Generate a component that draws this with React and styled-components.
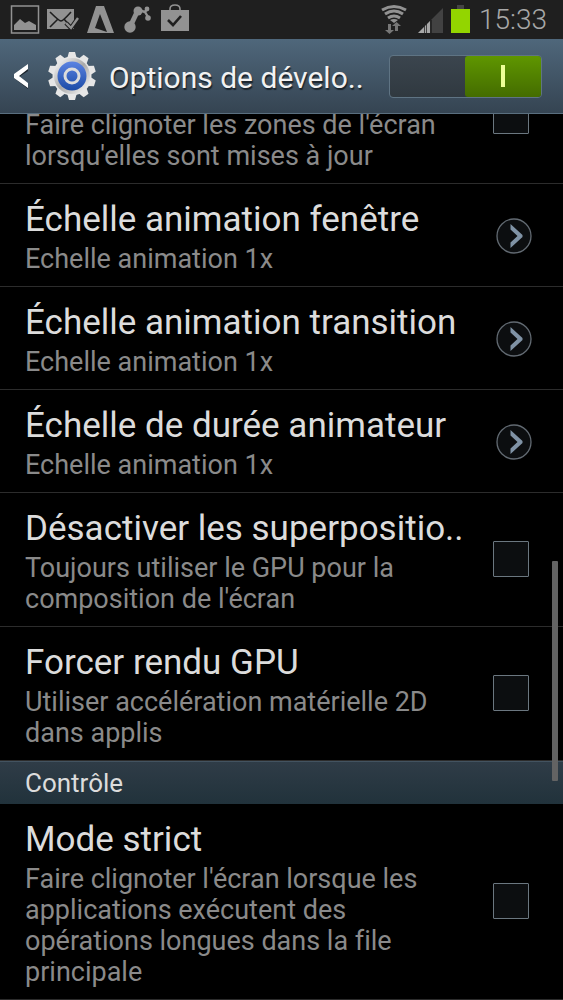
import { useState } from "react";
import styled, { createGlobalStyle } from "styled-components";

const GlobalStyle = createGlobalStyle`
    * {
        box-sizing: border-box;
    }
    body {
        margin: 0;
        background: #000;
        font-family: Roboto, "Liberation Sans", sans-serif;
        font-variant-ligatures: none;
    }
`
const Screen = styled.div`
    height: 100vh;
    display: flex;
    flex-direction: column;
    background: #000;
    color: #dcdcdc;
    overflow: hidden;
`
const StatusBar = styled.div`
    flex: none;
    height: 39px;
    padding: 0 16px 0 10px;
    display: flex;
    align-items: center;
    justify-content: space-between;
    background: #1f1f1f;
`
const StatusGroup = styled.div`
    display: flex;
    align-items: center;
    gap: 8px;
`
const Clock = styled.time`
    font-size: 28px;
    font-weight: 300;
    color: #a8a8a8;
`
const Header = styled.header`
    flex: none;
    height: 75px;
    padding: 0 21px 0 12px;
    display: flex;
    align-items: center;
    background: linear-gradient(#4f677b, #354452);
    border-bottom: 1px solid #5a6f7f;
`
const BackLink = styled.a`
    flex: 1;
    display: flex;
    align-items: center;
    color: #f2f2f2;
    text-decoration: none;
`
const HeaderTitle = styled.h1`
    margin: 0;
    padding: 4px 0 0 12px;
    font-size: 30px;
    font-weight: 400;
    line-height: 36px;
    white-space: nowrap;
    text-shadow: 1px 2px 1px #1b242c;
`
const Toggle = styled.button`
    width: 153px;
    height: 43px;
    padding: 0;
    display: flex;
    justify-content: ${(props) => (props.$on ? "flex-end" : "flex-start")};
    border: 1px solid #5f7484;
    border-radius: 4px;
    background: linear-gradient(#3b454e, #303940);
    cursor: pointer;
`
const Knob = styled.span`
    width: 76px;
    height: 100%;
    display: flex;
    align-items: center;
    justify-content: center;
    border-radius: 3px;
    background: linear-gradient(#5f9600, #446c00);
`
const KnobMark = styled.span`
    width: 4px;
    height: 22px;
    background: #eeff96;
`
const Viewport = styled.main`
    position: relative;
    flex: 1;
    min-height: 0;
    display: flex;
    flex-direction: column;
    justify-content: flex-end;
    overflow: hidden;
`
const Row = styled.label`
    flex: none;
    padding: 13px 31px 11px 25px;
    display: flex;
    align-items: center;
    border-bottom: 1px solid #2c2c2c;
    cursor: pointer;
`
const RowText = styled.div`
    flex: 1;
    min-width: 0;
`
const Title = styled.div`
    min-height: 45px;
    margin-bottom: 2px;
    font-size: 35px;
    line-height: 45px;
    white-space: nowrap;
`
const Sub = styled.div`
    max-width: 430px;
    font-size: 27px;
    line-height: 31px;
    color: #8a8a8a;
`
const CheckBox = styled.input`
    appearance: none;
    flex: none;
    width: 36px;
    height: 36px;
    margin: 0 3px 4px 0;
    border: 1px solid #6b7780;
    border-radius: 1px;
    background: #0c0e10;

    &:checked {
        background: #5f9600;
    }
`
const OpenButton = styled.button`
    flex: none;
    width: 36px;
    height: 36px;
    padding: 0;
    border: 0;
    background: none;
    cursor: pointer;
`
const Section = styled.h2`
    flex: none;
    margin: 0;
    padding: 0 25px;
    border-top: 1px solid #435360;
    background: linear-gradient(#2f3c47, #21323b);
    font-size: 26px;
    font-weight: 400;
    line-height: 42px;
`
// lies over the rows, like the scroll indicator on the device
const ScrollThumb = styled.div`
    position: absolute;
    top: 447px;
    right: 5px;
    width: 6px;
    height: 220px;
    border-radius: 1px;
    background: #636363;
`
const GearIcon = styled.svg`
    margin-left: 17px;
`

const NoticeIcons = () => (
    <svg width="182" height="36" viewBox="10 2 182 36" fill="#929292" aria-hidden="true">
        <rect x="11.5" y="6" width="27" height="27" fill="none" stroke="#929292" strokeWidth="1.5" />
        <path d="M14 30v-5l6-6 5 4 4-2 7 4v5z" />
        <path d="M47 9h27v20H47z" />
        <path d="M50 12q9 9 11 9t10-9M50 27l8-8M70 26l-6-7" fill="none" stroke="#1f1f1f" strokeWidth="1.6" />
        <path d="M66 23l5 5 7-10" fill="none" stroke="#1f1f1f" strokeWidth="4.5" />
        <path d="M66 23l5 5 7-10" fill="none" stroke="#929292" strokeWidth="2.4" />
        <path fillRule="evenodd" d="M96 6h8l10 27H87zM100 14L95 28l12 4z" />
        <path d="M130 27l8-17" fill="none" stroke="#929292" strokeWidth="5" />
        <path d="M139 10l6 2 3 5M145 12l2-3" fill="none" stroke="#929292" strokeWidth="2.4" />
        <circle cx="130" cy="27" r="5.7" />
        <circle cx="138" cy="11" r="4.5" />
        <circle cx="147" cy="9" r="2.4" />
        <circle cx="148" cy="18" r="2.8" />
        <path d="M161 10h28v21h-28z" />
        <path d="M170 12V9q0-4 5-4t5 4v3" fill="none" stroke="#929292" strokeWidth="1.6" />
        <path d="M168 20l5 5 8-9" fill="none" stroke="#1f1f1f" strokeWidth="2.6" />
    </svg>
)

const SignalIcons = () => (
    <svg width="90" height="36" viewBox="380 2 90 36" aria-hidden="true">
        <g fill="none" stroke="#929292" strokeWidth="3">
            <path d="M381 10q12-7 24 0M384 14q9-6 18 0M387 18q6-4 12 0" />
        </g>
        <path d="M389 20q4-2 8 0l-4 3z" fill="#929292" />
        <path d="M387 24v6h-3l4.5 4 4.500-4h-3v-6zM394 31v-5h-3l4.500-4 4.500 4h-3v5z" fill="#777" />
        <path d="M417 33l25-25v25z" fill="#424242" />
        <path d="M417 33l6-6v6zM424 26l1-1v8h-1zM426 24l3-3v12h-3z" fill="#a8a8a8" />
        <path d="M430 20v13" stroke="#1f1f1f" strokeWidth="1.5" />
        <path d="M456 5h7v4h-7z" fill="#444" />
        <path d="M450 9h19v24h-19z" fill="#93d500" />
    </svg>
)

const BackArrow = () => (
    <svg width="18" height="30" viewBox="0 0 18 30" aria-hidden="true">
        <path d="M16 5v5l-9 6 9 7v5L2 17v-2z" fill="#1b242c" />
        <path d="M16 3v5L7 15l9 7v5L2 17v-4z" fill="#fff" />
    </svg>
)

const Gear = () => (
    <GearIcon width="50" height="50" viewBox="-25 -25 50 50" aria-hidden="true">
        <defs>
            <linearGradient id="metal" x1="0" y1="0" x2="1" y2="1">
                <stop offset="0" stopColor="#fff" />
                <stop offset="0.5" stopColor="#a9a9a9" />
                <stop offset="1" stopColor="#fff" />
            </linearGradient>
            <linearGradient id="blue" x1="0" y1="0" x2="0" y2="1">
                <stop offset="0" stopColor="#5b83e2" />
                <stop offset="1" stopColor="#1c4ba6" />
            </linearGradient>
        </defs>
        {[0, 36, 72, 108, 144, 180, 216, 252, 288, 324].map((angle) => (
            <path key={angle} d="M-5-17l2-7h6l2 7z" fill="#e6e6e6" transform={`rotate(${angle})`} />
        ))}
        <circle r="19.5" fill="#e6e6e6" />
        <circle r="18" fill="url(#metal)" />
        <circle r="14.5" fill="url(#blue)" />
        <circle r="7" fill="none" stroke="#dcdcdc" strokeWidth="3" />
    </GearIcon>
)

const OpenRow = ({ title, sub }) => (
    <Row as="div">
        <RowText>
            <Title>{title}</Title>
            <Sub>{sub}</Sub>
        </RowText>
        <OpenButton aria-label={title}>
            <svg width="36" height="36" viewBox="0 0 36 36" aria-hidden="true">
                <circle cx="18" cy="18" r="17" fill="#0c0e10" stroke="#626a72" strokeWidth="1.3" />
                <path d="M14.5 6v5.500l7 6.500-7 6.500V30l12-11v-2z" fill="#8093a6" />
            </svg>
        </OpenButton>
    </Row>
)

const CheckRow = ({ title, sub }) => (
    <Row>
        <RowText>
            <Title>{title}</Title>
            <Sub>{sub}</Sub>
        </RowText>
        <CheckBox type="checkbox" />
    </Row>
)

const App = () => {

    const [enabled, setEnabled] = useState(true);

    return (
        <Screen>
            <GlobalStyle />
            <StatusBar>
                <NoticeIcons />
                <StatusGroup>
                    <SignalIcons />
                    <Clock>15:33</Clock>
                </StatusGroup>
            </StatusBar>
            <Header>
                <BackLink href="#">
                    <BackArrow />
                    <Gear />
                    <HeaderTitle>Options de dévelo..</HeaderTitle>
                </BackLink>
                <Toggle
                    role="switch"
                    aria-checked={enabled}
                    aria-label="Options"
                    $on={enabled}
                    onClick={() => setEnabled(!enabled)}
                >
                    <Knob>
                        <KnobMark />
                    </Knob>
                </Toggle>
            </Header>
            <Viewport>
                <CheckRow sub="Faire clignoter les zones de l'écran lorsqu'elles sont mises à jour" />
                <OpenRow title="Échelle animation fenêtre" sub="Echelle animation 1x" />
                <OpenRow title="Échelle animation transition" sub="Echelle animation 1x" />
                <OpenRow title="Échelle de durée animateur" sub="Echelle animation 1x" />
                <CheckRow title="Désactiver les superpositio.." sub="Toujours utiliser le GPU pour la composition de l'écran" />
                <CheckRow title="Forcer rendu GPU" sub="Utiliser accélération matérielle 2D dans applis" />
                <Section>Contrôle</Section>
                <CheckRow title="Mode strict" sub="Faire clignoter l'écran lorsque les applications exécutent des opérations longues dans la file principale" />
                <ScrollThumb />
            </Viewport>
        </Screen>
    )
}
export default App;
